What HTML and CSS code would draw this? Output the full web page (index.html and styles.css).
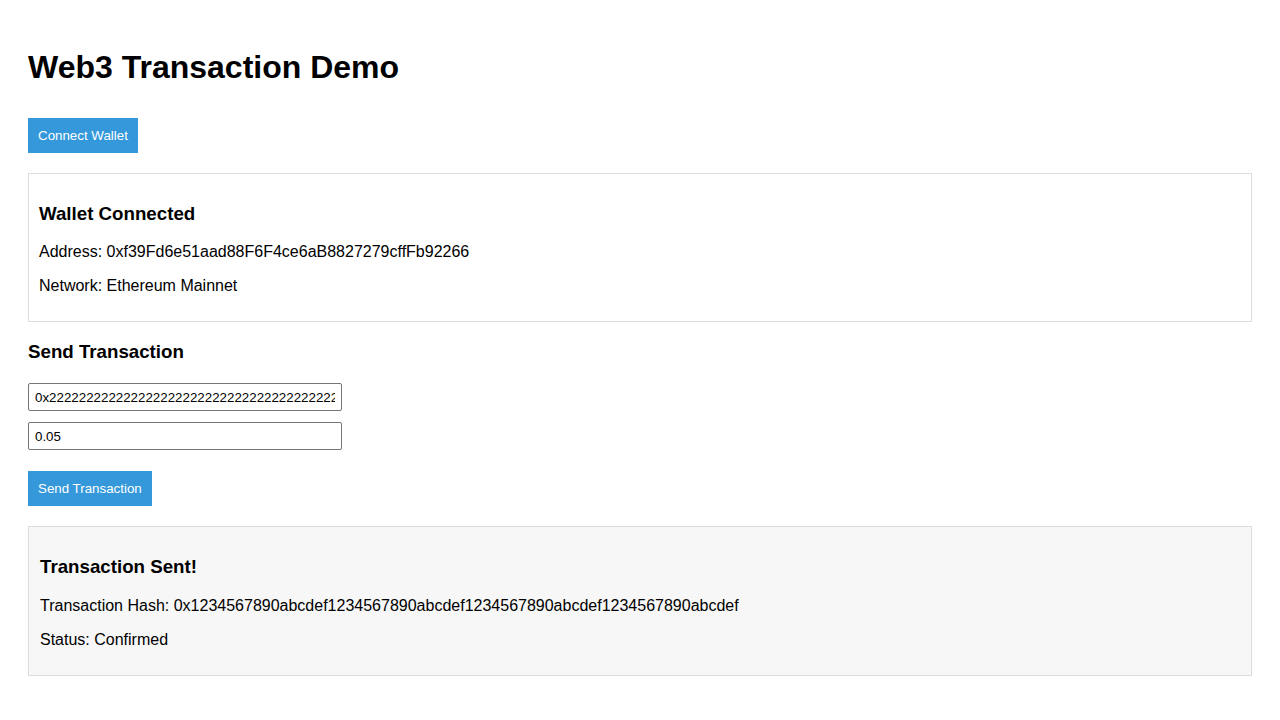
FILE: index.html
```html
<!DOCTYPE html>
<html lang="en">
<head>
<meta charset="utf-8">
<title>Web3 Transaction Demo</title>
<link rel="stylesheet" href="styles.css">
</head>
<body>
<div class="app">
  <h1>Web3 Transaction Demo</h1>
  <button class="btn">Connect Wallet</button>
  <div class="card">
    <h3>Wallet Connected</h3>
    <p>Address: 0xf39Fd6e51aad88F6F4ce6aB8827279cffFb92266</p>
    <p>Network: Ethereum Mainnet</p>
  </div>
  <h3 class="section-title">Send Transaction</h3>
  <input class="field" type="text" value="0x2222222222222222222222222222222222222222">
  <input class="field" type="text" value="0.05">
  <button class="btn">Send Transaction</button>
  <div class="card result">
    <h3>Transaction Sent!</h3>
    <p>Transaction Hash: 0x1234567890abcdef1234567890abcdef1234567890abcdef1234567890abcdef</p>
    <p>Status: Confirmed</p>
  </div>
</div>
</body>
</html>
```
FILE: styles.css
```css
body {
  margin: 8px;
  font-family: "Liberation Sans", Arial, sans-serif;
  color: #000;
  background: #fff;
}
.app {
  padding: 20px;
}
h1 {
  font-size: 32px;
  margin: 21px 0 32px;
}
h3 {
  font-size: 18.72px;
  margin: 18.72px 0;
}
p {
  font-size: 16px;
  margin: 16px 0;
}
.btn {
  display: block;
  margin: 10px 0;
  padding: 10px;
  border: none;
  background: #3498db;
  color: #fff;
  font-family: "Liberation Sans", Arial, sans-serif;
  font-size: 13.33px;
  cursor: pointer;
}
.card {
  margin: 20px 0 0;
  padding: 10px;
  border: 1px solid #ddd;
}
.result {
  background: #f7f7f7;
  padding: 10px 11px;
}
.section-title {
  margin: 19px 0 20px;
}
.field {
  display: block;
  box-sizing: border-box;
  width: 314px;
  height: 28px;
  margin: 0 0 11px;
  padding: 0 6px;
  border: 1px solid #767676;
  border-radius: 2px;
  font-family: "Liberation Sans", Arial, sans-serif;
  font-size: 13.33px;
  color: #000;
}
.field + .field {
  margin-bottom: 21px;
}
```
